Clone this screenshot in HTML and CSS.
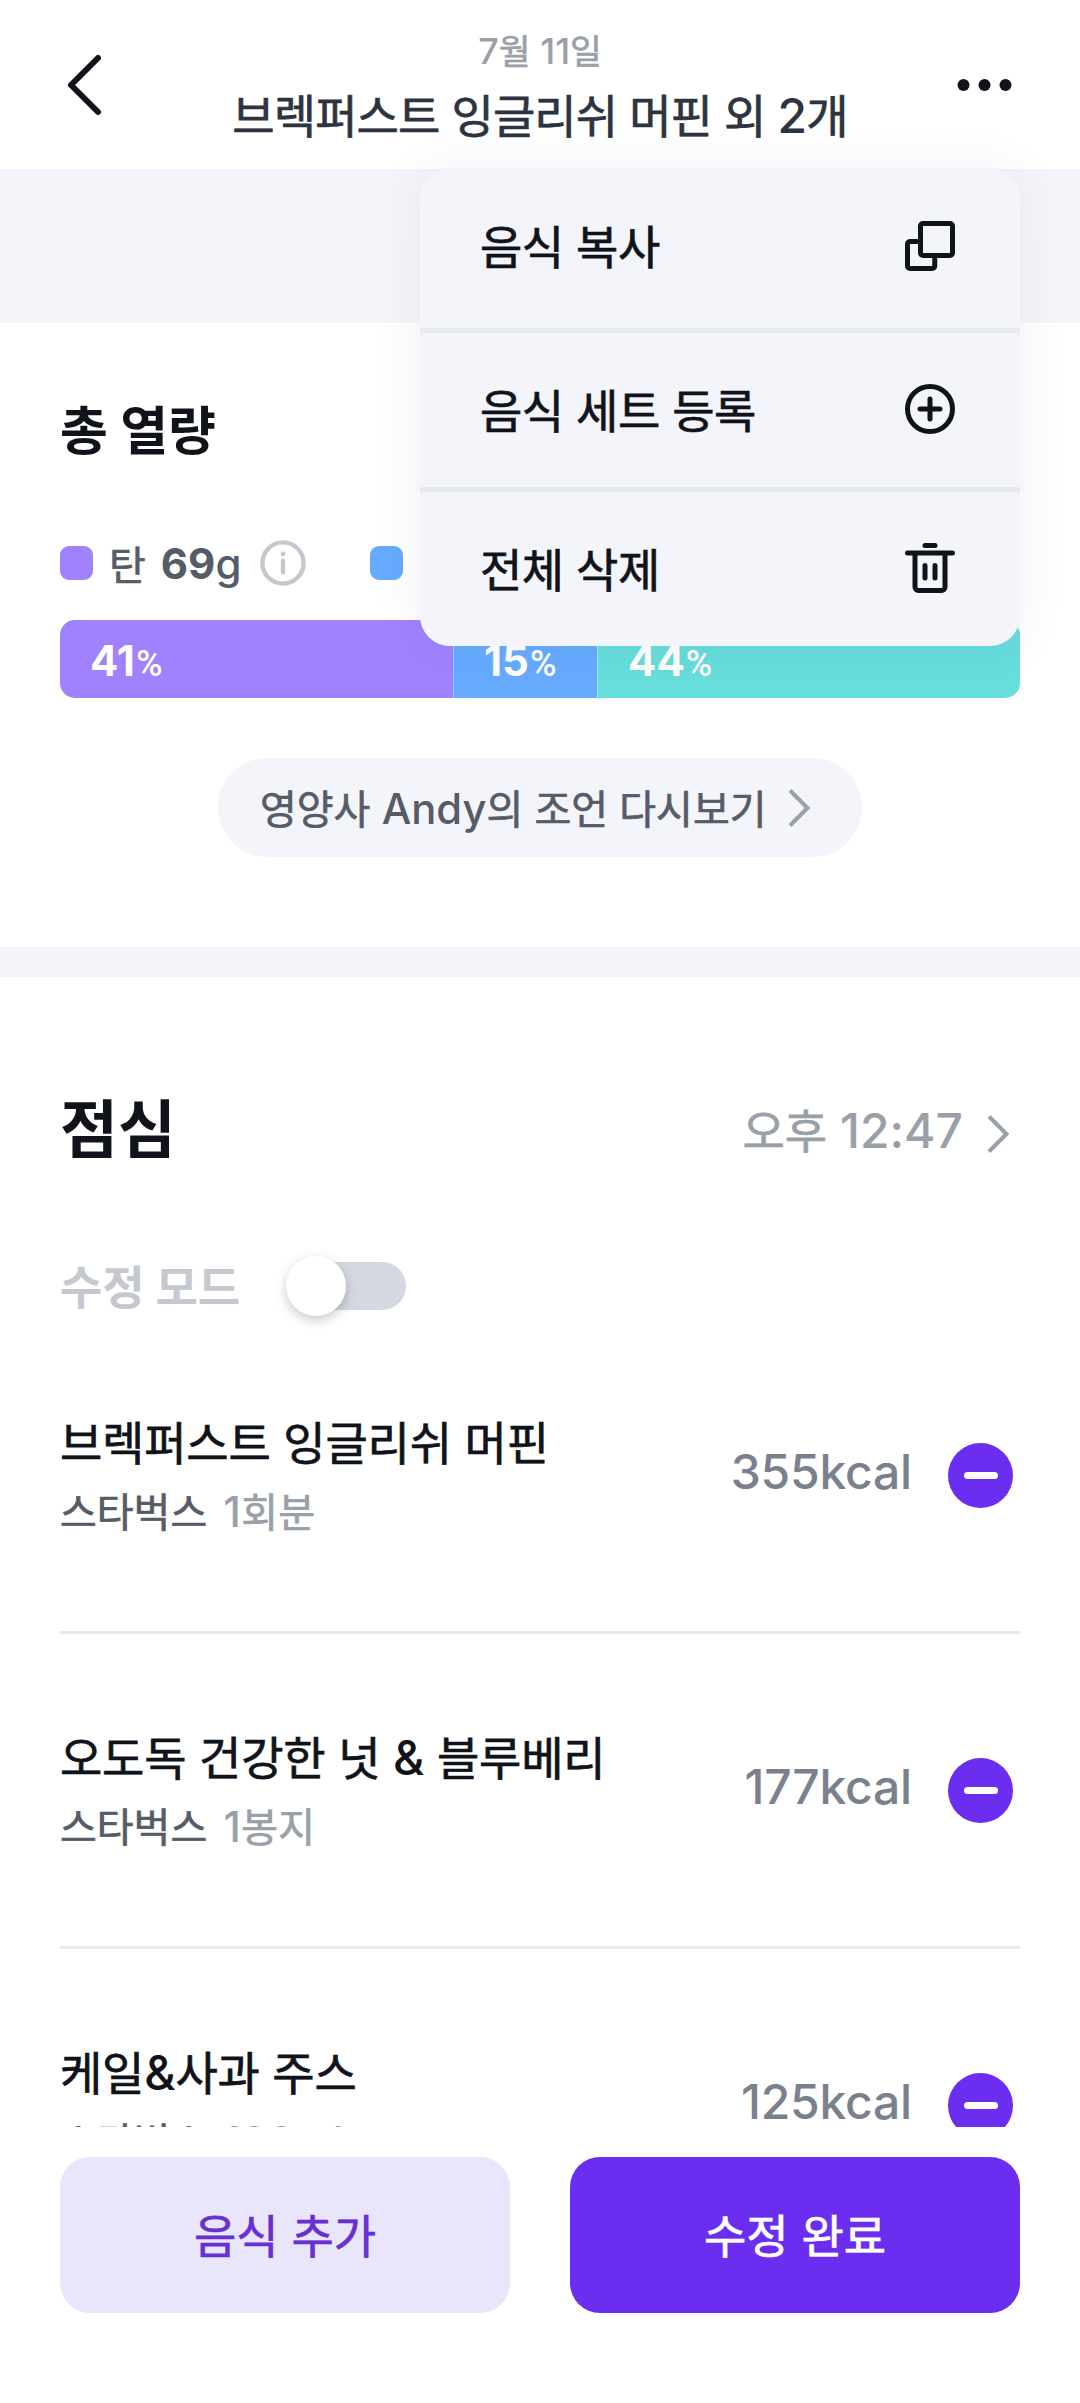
FILE: index.html
```html
<!DOCTYPE html>
<html lang="ko">
<head>
<meta charset="utf-8">
<title>식단 상세</title>
<link rel="stylesheet" href="styles.css">
</head>
<body>
<div class="app">
  <header class="topbar">
    <svg class="icon-back" viewBox="0 0 60 72" fill="none" stroke="#10131a" stroke-width="6" stroke-linecap="round" stroke-linejoin="round"><path d="M38 9 11 36l27 27"/></svg>
    <div class="heading">
      <p class="date"><span class="num">7</span>월 <span class="num">11</span>일</p>
      <h1 class="title">브렉퍼스트 잉글리쉬 머핀 외 <span class="num">2</span>개</h1>
    </div>
    <svg class="icon-more" viewBox="0 0 56 12" fill="#10131a"><circle cx="6.5" cy="6" r="6"/><circle cx="27.5" cy="6" r="6"/><circle cx="48.5" cy="6" r="6"/></svg>
    <div class="menu">
      <div class="menu-item">
        <span class="menu-label">음식 복사</span>
        <svg class="menu-icon" viewBox="0 0 24 24" fill="none" stroke="#10131a" stroke-width="2" stroke-linejoin="round"><rect x="8.2" y="3" width="12.8" height="12.8" rx="1"/><path d="M8.2 10.2H4A1 1 0 0 0 3 11.2V20A1 1 0 0 0 4 21H12.9A1 1 0 0 0 13.9 20V15.8"/></svg>
      </div>
      <div class="menu-item">
        <span class="menu-label">음식 세트 등록</span>
        <svg class="menu-icon" viewBox="0 0 24 24" fill="none" stroke="#10131a" stroke-width="2" stroke-linecap="round"><circle cx="12" cy="12" r="9"/><path d="M12 8v8M8 12h8"/></svg>
      </div>
      <div class="menu-item">
        <span class="menu-label">전체 삭제</span>
        <svg class="menu-icon" viewBox="0 0 24 24" fill="none" stroke="#10131a" stroke-width="2" stroke-linecap="round" stroke-linejoin="round"><path d="M10 3h4M3 6h18M6 6v13.6A1.4 1.4 0 0 0 7.4 21h9.2a1.4 1.4 0 0 0 1.4-1.4V6M10 11v5M14 11v5"/></svg>
      </div>
    </div>
  </header>

  <main class="content">
    <div class="band-top"></div>
    <section class="summary">
      <h2 class="summary-title">총 열량</h2>
      <div class="legend">
        <i class="swatch carb"></i>
        <span class="legend-label">탄</span>
        <span class="legend-value"><b>69</b>g</span>
        <svg class="icon-info" viewBox="0 0 46 46" fill="none" stroke="#c5c7ce" stroke-width="4.4" stroke-linecap="round"><circle cx="23" cy="23" r="20.6"/><path d="M23 20.5v11.8"/><circle cx="23" cy="14" r="2.4" fill="#c5c7ce" stroke="none"/></svg>
        <i class="swatch protein"></i>
      </div>
      <div class="ratio">
        <div class="ratio-part carb" style="width:393px"><b>41</b><span class="percent">%</span></div>
        <div class="ratio-part protein" style="width:144px"><b>15</b><span class="percent">%</span></div>
        <div class="ratio-part fat" style="width:423px"><b>44</b><span class="percent">%</span></div>
      </div>
      <div class="advice">
        <span>영양사 <span class="num">Andy</span>의 조언 다시보기</span>
        <svg class="icon-next" viewBox="0 0 24 40" fill="none" stroke="#9aa0a8" stroke-width="4"><path d="M2 2.5 19.5 20 2 37.5"/></svg>
      </div>
    </section>
    <div class="band"></div>
    <section class="meal">
      <div class="meal-head">
        <h2 class="meal-title">점심</h2>
        <div class="meal-time">
          <span class="time">오후 <span class="num">12:47</span></span>
          <svg class="icon-next" viewBox="0 0 24 40" fill="none" stroke="#9aa0a8" stroke-width="4"><path d="M2 2.5 19.5 20 2 37.5"/></svg>
        </div>
      </div>
      <div class="edit-mode">
        <span class="edit-label">수정 모드</span>
        <div class="switch"><i class="knob"></i></div>
      </div>
      <ul class="foods">
        <li class="food">
          <div class="food-text">
            <p class="food-name">브렉퍼스트 잉글리쉬 머핀</p>
            <p class="food-sub">스타벅스 <span class="amount"><span class="num">1</span>회분</span></p>
          </div>
          <span class="kcal">355kcal</span>
          <i class="minus"></i>
        </li>
        <li class="food">
          <div class="food-text">
            <p class="food-name">오도독 건강한 넛 <span class="num">&amp;</span> 블루베리</p>
            <p class="food-sub">스타벅스 <span class="amount"><span class="num">1</span>봉지</span></p>
          </div>
          <span class="kcal">177kcal</span>
          <i class="minus"></i>
        </li>
        <li class="food">
          <div class="food-text">
            <p class="food-name">케일<span class="num">&amp;</span>사과 주스</p>
            <p class="food-sub">스타벅스 <span class="amount"><span class="num">190ml</span></span></p>
          </div>
          <span class="kcal">125kcal</span>
          <i class="minus"></i>
        </li>
      </ul>
    </section>
  </main>

  <footer class="actions">
    <div class="button light">음식 추가</div>
    <div class="button primary">수정 완료</div>
  </footer>
</div>
</body>
</html>
```

FILE: styles.css
```css
* { box-sizing: border-box; margin: 0; padding: 0; }

body {
  background: #fff;
  font-family: Inter, "Noto Sans CJK KR", sans-serif;
  font-weight: 400;
  color: #10131a;
  /* half-step heavier than regular Hangul */
  -webkit-text-stroke: 0.7px currentColor;
}

.app {
  width: 1080px;
  height: 2403px;
  display: flex;
  flex-direction: column;
  overflow: hidden;
}

svg { display: block; flex: none; }
/* Latin glyphs sit slightly larger than the Hangul around them */
.num { font-size: 1.043em; line-height: 1; font-weight: 500; -webkit-text-stroke: 0; }

/* top bar */
.topbar {
  position: relative;
  z-index: 2;
  flex: none;
  height: 169px;
  display: flex;
  justify-content: space-between;
  padding: 0 60px;
}
.icon-back { width: 60px; height: 72px; margin-top: 49px; }
.icon-more { width: 56px; height: 12px; margin-top: 79px; margin-right: 7px; }
.heading { flex: 1; padding: 26px 0 0 3px; text-align: center; white-space: nowrap; }
.date { font-size: 34.5px; line-height: 51px; color: #9aa0a8; }
.title { margin-top: 9px; font-size: 46px; line-height: 60px; font-weight: 400; letter-spacing: -0.9px; color: #2e3340; }

/* popup menu */
.menu {
  position: absolute;
  top: 169px;
  left: 420px;
  width: 600px;
  border-radius: 30px;
  background: #f4f5fa;
  box-shadow: 0 0 50px rgba(60, 50, 120, 0.07);
}
.menu-item {
  display: flex;
  align-items: center;
  justify-content: space-between;
  height: 159px;
  padding: 0 60px 2px;
  border-bottom: 5px solid #e7eaed;
  font-size: 46px;
  letter-spacing: -0.5px;
}
.menu-item:first-child { height: 164px; padding-bottom: 6px; }
.menu-item:last-child { height: 154px; border-bottom: 0; }
.menu-label { padding-bottom: 3px; }
.menu-icon { width: 60px; height: 60px; }

/* scroll area */
.content { flex: 1; overflow: hidden; }
.band-top { height: 154px; background: #f4f5fa; }
.band { height: 30px; background: #f4f5fa; }

.summary { padding: 79px 60px 90px; }
.summary-title { font-size: 52px; line-height: 60px; font-weight: 700; -webkit-text-stroke: 0; }

.legend {
  display: flex;
  align-items: center;
  height: 46px;
  margin-top: 78px;
  color: #565b68;
}
.swatch { width: 33px; height: 34px; border-radius: 9px; }
.carb { background: #a082ff; }
.protein { background: #66abff; }
.fat { background: #67dddc; }
.legend-label { margin-left: 16px; font-size: 40px; }
.legend-value { margin-left: 15px; font-size: 42px; font-weight: 500; -webkit-text-stroke: 0; }
.legend b { font-weight: 700; }
.icon-info { width: 46px; height: 46px; margin: 0 64px 0 19px; }

.ratio {
  display: flex;
  height: 78px;
  margin-top: 34px;
  border-radius: 15px;
  overflow: hidden;
}
.ratio-part {
  display: flex;
  align-items: baseline;
  padding-left: 30px;
  line-height: 82px;
  color: #fff;
  -webkit-text-stroke: 0;
}
.ratio-part + .ratio-part { border-left: 1px solid rgba(255, 255, 255, 0.4); }
.ratio-part b { font-size: 42px; font-weight: 700; }
.percent { margin-left: 1px; font-family: Roboto, sans-serif; font-size: 36px; font-weight: 500; }

.advice {
  display: flex;
  align-items: center;
  width: 644px;
  height: 99px;
  margin: 60px auto 0;
  padding-left: 42px;
  border-radius: 50px;
  background: #f4f5fa;
  color: #565b68;
  font-size: 40px;
}
.advice > span { padding-bottom: 2px; }
.icon-next { width: 24px; height: 40px; }
.advice .icon-next { margin-left: 21px; }

/* meal section */
.meal { padding: 112px 60px 0; }
.meal-head { display: flex; align-items: center; justify-content: space-between; height: 80px; }
.meal-title { font-size: 63px; line-height: 80px; font-weight: 700; -webkit-text-stroke: 0; }
.meal-time {
  display: flex;
  align-items: center;
  padding-right: 9px;
  font-size: 46px;
  color: #9aa0a8;
}
.time { padding-bottom: 3px; }
.meal-time .icon-next { margin: 9px 0 0 24px; }

.edit-mode { display: flex; align-items: center; height: 60px; margin-top: 87px; }
.edit-label { padding-bottom: 4px; font-size: 46px; font-weight: 700; color: #c5c8cf; -webkit-text-stroke: 0; }
.switch {
  display: flex;
  align-items: center;
  width: 116px;
  height: 48px;
  margin-left: 50px;
  border-radius: 24px;
  background: #d5d8e0;
}
.knob {
  flex: none;
  width: 60px;
  height: 60px;
  margin-left: -4px;
  border-radius: 50%;
  background: #fff;
  box-shadow: 0 4px 12px rgba(0, 0, 0, 0.22);
}

.foods { list-style: none; margin-top: 3px; }
.food {
  display: flex;
  align-items: center;
  height: 315px;
  padding: 0 7px 0 0;
  border-bottom: 3px solid #e7e9ec;
}
.food-text { flex: 1; }
.food-name { font-size: 46px; line-height: 60px; letter-spacing: -0.2px; }
.food-sub { margin-top: 15px; font-size: 40px; line-height: 50px; color: #565b68; }
.amount { margin-left: 5px; letter-spacing: 0.4px; color: #9aa0a8; }
.kcal { padding-bottom: 7px; font-size: 48px; font-weight: 500; letter-spacing: -0.2px; color: #7a808c; -webkit-text-stroke: 0; }
.minus {
  display: flex;
  align-items: center;
  justify-content: center;
  width: 65px;
  height: 65px;
  margin-left: 36px;
  border-radius: 50%;
  background: #6b2ef0;
}
.minus::before {
  content: "";
  width: 34px;
  height: 7px;
  border-radius: 4px;
  background: #fff;
}

/* bottom actions */
.actions {
  flex: none;
  display: flex;
  gap: 60px;
  height: 276px;
  padding: 30px 60px 90px;
  background: #fff;
}
.button {
  flex: 1;
  height: 156px;
  border-radius: 30px;
  font-size: 46px;
  line-height: 158px;
  text-align: center;
}
.light { background: #e9e6fb; color: #6730d2; }
.primary { background: #6b2ef0; color: #fff; }
```
